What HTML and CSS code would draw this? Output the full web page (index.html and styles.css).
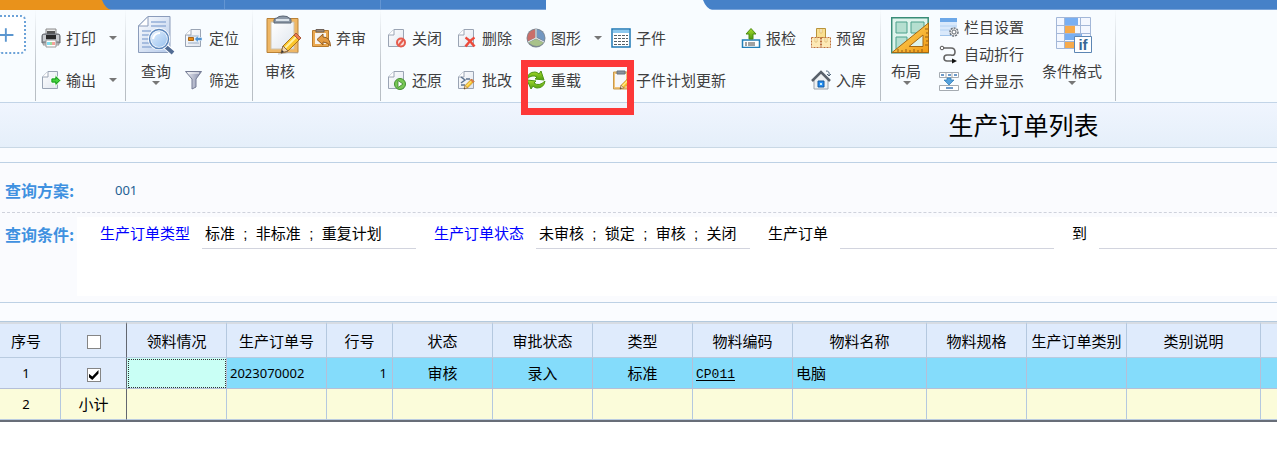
FILE: index.html
```html
<!DOCTYPE html>
<html lang="zh-CN">
<head>
<meta charset="utf-8">
<title>生产订单列表</title>
<link rel="stylesheet" href="styles.css">
</head>
<body>
<svg class="defs" aria-hidden="true">
  <defs>
    <linearGradient id="paper" x1="0" y1="0" x2="1" y2="1"><stop offset="0" stop-color="#fff"/><stop offset="1" stop-color="#dfe5ee"/></linearGradient>
    <linearGradient id="bluepaper" x1="0" y1="0" x2="1" y2="1"><stop offset="0" stop-color="#fff"/><stop offset="1" stop-color="#b4c9ea"/></linearGradient>
    <linearGradient id="lens" x1="0" y1="0" x2="1" y2="1"><stop offset="0" stop-color="#e8f3ff"/><stop offset="1" stop-color="#93bdec"/></linearGradient>
    <linearGradient id="funnel"><stop offset="0" stop-color="#eef0f5"/><stop offset="1" stop-color="#8289a8"/></linearGradient>
    <linearGradient id="green" x1="0" y1="0" x2="0" y2="1"><stop offset="0" stop-color="#a6dc2c"/><stop offset="1" stop-color="#4f9c10"/></linearGradient>
    <linearGradient id="gold" x1="0" y1="0" x2="1" y2="1"><stop offset="0" stop-color="#ffdc6a"/><stop offset="1" stop-color="#f29a12"/></linearGradient>
    <symbol id="doc" viewBox="0 0 20 20"><path d="M7 1.500h9.500v17H1.500V7z" fill="url(#paper)" stroke="#9aa4b4"/><path d="M7 1.500V7H1.500" fill="#fff" stroke="#9aa4b4"/></symbol>
    <symbol id="pencil" viewBox="0 0 24 24"><path d="M2 22l2-7L17 2l5 5L9 20z" fill="#fbc52a" stroke="#a8741b"/><path d="M6 17L19 4" stroke="#fff0a0" stroke-width="2"/><path d="M15 4l2-2 5 5-2 2z" fill="#ee7b4b" stroke="#ab5a3c"/><path d="M2 22l2-7 5 5z" fill="#f2d7ae" stroke="#8a6b4b"/><path d="M2 22l1-3 2 2z" fill="#333"/></symbol>
  </defs>
</svg>

<nav class="tabs" aria-label="页签">
  <span class="tab-home"></span>
  <svg class="tab-edge" viewBox="0 0 10 10"><path d="M0 0h1q3 8 9 10H0z" fill="#e9921b"/></svg>
  <span class="tab tab-first"></span>
  <span class="tab tab-mid"></span>
  <span class="tab tab-wide"></span>
  <span class="tab-active"></span>
  <svg class="tab-edge" viewBox="0 0 10 10"><path d="M0 0h1q3 8 9 10H0z" fill="#f8fcff"/></svg>
</nav>

<header class="ribbon">
  <section class="group group-add">
    <button class="add" aria-label="添加"><svg viewBox="0 0 25 38"><path d="M-1 19H14M6 12v14" stroke="#5b96cf" stroke-width="2"/></svg></button>
  </section>

  <section class="group group-output">
    <div class="stack">
      <button class="cmd menu"><svg class="ic" viewBox="0 0 20 20"><path d="M5 8V1h10v7" fill="#e8e8e8" stroke="#8b8b8b"/><path d="M6 3h8v5H6z" fill="#555"/><path d="M1 8q0-2 2-2h14q2 0 2 2v7H1z" fill="#9a9da3" stroke="#63666c"/><path d="M2 7h3v6H2zM15 7h3v6h-3z" fill="#c9ccd0"/><path d="M5 7h10v4H5z" fill="#292929"/><path d="M3 15h14l1 2H2z" fill="#cfd3d8" stroke="#999"/><path d="M5 12h10v7H5z" fill="#fff" stroke="#9a9a9a"/><path d="M6 14h3v3H6z" fill="#7fdcf0"/><path d="M9 14h2v3H9z" fill="#9bdc9b"/><path d="M11 14h3v3h-3z" fill="#f4a39a"/></svg><span>打印</span><i class="arrow"></i></button>
      <button class="cmd menu"><svg class="ic" viewBox="0 0 20 20"><use href="#doc" width="20" height="20"/><path d="M10 8h4V4.500l6 6-6 6V13h-4z" fill="#35cd37" stroke="#fff"/><path d="M11 9h4V7l3.500 3.500L15 14v-2h-4z" fill="#44d53c" stroke="#219b25"/></svg><span>输出</span><i class="arrow"></i></button>
    </div>
  </section>

  <section class="group group-query">
    <button class="big"><svg class="ic-big" viewBox="0 0 38 40"><path d="M11 1.500h22v36H1.500V11z" fill="url(#bluepaper)" stroke="#8b9cbb"/><path d="M11 1.500V11H1.500z" fill="#fff" stroke="#8b9cbb"/><path d="M14 7h15M14 11h15M5 16h9M5 20h7M5 24h7M5 28h9M5 32h12" stroke="#94afd8" stroke-width="1.500"/><path d="M27 30l8 7" stroke="#fff" stroke-width="6"/><path d="M28 31l8 7" stroke="#526c94" stroke-width="4"/><circle cx="22" cy="24" r="9.500" fill="url(#lens)" stroke="#fff" stroke-width="3"/><circle cx="22" cy="24" r="9.500" fill="none" stroke="#5d87bd" stroke-width="1.500"/><path d="M16 24q1-6 7-6" fill="none" stroke="#fff" stroke-width="2"/></svg><span>查询</span><i class="arrow"></i></button>
    <div class="stack">
      <button class="cmd"><svg class="ic" viewBox="0 0 20 20"><use href="#doc" width="20" height="20"/><path d="M4 8h11M4 10h3M4 12h3M4 15h11" stroke="#9baec6"/><path d="M4.500 9.500h5v3h-5z" fill="#e98d16" stroke="#a96516"/><path d="M18 9.500h-4V7.500L10.500 11l3.500 3.500v-2h4z" fill="#4e91cf" stroke="#e9f5ff" stroke-width=".6"/></svg><span>定位</span></button>
      <button class="cmd"><svg class="ic" viewBox="0 0 20 20"><path d="M1.500 1.500h16L12 9v8l-4 2V9z" fill="url(#funnel)" stroke="#747b94"/><path d="M4 3h11" stroke="#fff"/></svg><span>筛选</span></button>
    </div>
  </section>

  <section class="group group-review">
    <button class="big big-left"><svg class="ic-big" viewBox="0 0 38 40"><path d="M2 3.500h31v34H2z" fill="#efb765" stroke="#b98136"/><path d="M6 7h23v27H6z" fill="url(#paper)" stroke="#cfc3ad"/><path d="M9 8V5q0-2 3-2 1-2 6-2t6 2q2 0 2 2v3z" fill="#8d99a8" stroke="#596574"/><path d="M11 5h13" stroke="#dbe3ea" stroke-width="2"/><path d="M13 39q10-2 20-1" stroke="#bbb" fill="none"/><use href="#pencil" x="14" y="16" width="24" height="24"/></svg><span>审核</span></button>
    <div class="stack">
      <button class="cmd"><svg class="ic" viewBox="0 0 20 20"><path d="M1.500 2.500h16v16h-16z" fill="#eaa850" stroke="#b77a2e"/><path d="M4 5h11v11H4z" fill="#f7f4ef"/><path d="M5 4V1.500h8V4z" fill="#9f8a77" stroke="#6f6258"/><path d="M6 11.500L12 6v3q7 0 7.500 9-3-4-7.500-4v3z" fill="#e39b42" stroke="#925c22"/></svg><span>弃审</span></button>
    </div>
  </section>

  <section class="group group-actions">
    <button class="cmd"><svg class="ic" viewBox="0 0 20 20"><use href="#doc" width="20" height="20"/><circle cx="14" cy="14.500" r="4" fill="#f8deda" stroke="#e65b4d" stroke-width="2"/><path d="M11.500 17.500l5-6" stroke="#e65b4d" stroke-width="2"/></svg><span>关闭</span></button>
    <button class="cmd"><svg class="ic" viewBox="0 0 20 20"><use href="#doc" width="20" height="20"/><path d="M8.500 9.500q5 3 9 9M17.500 9.500q-5 3-9 9" fill="none" stroke="#ed4a3b" stroke-width="2.500"/></svg><span>删除</span></button>
    <button class="cmd menu"><svg class="ic" viewBox="0 0 20 20"><circle cx="10" cy="10" r="9.500" fill="#7c8791"/><path d="M9 10V1.500A8.500 8.500 0 0 0 2 13z" fill="#c96e69"/><path d="M11 9V1.500A8.500 8.500 0 0 1 18 13z" fill="#7297c1"/><path d="M10 11l7.500 3.500q-6 7-15 0z" fill="#a8c28a"/><path d="M10 1v9l8 4M10 10l-8 4" fill="none" stroke="#eef2f3"/></svg><span>图形</span><i class="arrow"></i></button>
    <button class="cmd"><svg class="ic" viewBox="0 0 20 20"><path d="M1 1h18v18H1z" fill="#fff" stroke="#1e78b5" stroke-width="1.500"/><path d="M2 2h16v3H2z" fill="#8cc8ee"/><path d="M3 7.500h14M3 10.500h14M3 13.500h14M3 16.500h14" stroke="#566168" stroke-dasharray="3 1"/></svg><span>子件</span></button>
    <button class="cmd"><svg class="ic" viewBox="0 0 20 20"><path d="M1.500 12h17v7.500h-17z" fill="#fff" stroke="#227fb8" stroke-width="1.500"/><path d="M4 15h2M7 15h7M4 17h2M7 17h7" stroke="#444"/><path d="M10 .5L15 6h-3v5H8V6H5z" fill="url(#green)" stroke="#4b8b13"/></svg><span>报检</span></button>
    <button class="cmd"><svg class="ic" viewBox="0 0 20 20"><path d="M5.500.5h9v9h-9z" fill="#f9df91" stroke="#b8943c"/><path d="M.5 9.500h9v10h-9zM10.500 9.500h9v10h-9z" fill="#fde9b6" stroke="#bd713c" stroke-dasharray="2 1"/><path d="M9 1v4h2V1M4 10v4h2v-4M14 10v4h2v-4" fill="#fff5d4" stroke="#d7ad59" stroke-width=".6"/></svg><span>预留</span></button>
    <button class="cmd"><svg class="ic" viewBox="0 0 20 20"><use href="#doc" width="20" height="20"/><circle cx="13" cy="14" r="5.500" fill="#78c855" stroke="#428e32"/><path d="M11 10.500v7l5-3.500z" fill="#fff" stroke="#397d2b" stroke-width=".8"/></svg><span>还原</span></button>
    <button class="cmd"><svg class="ic" viewBox="0 0 20 20"><use href="#doc" width="20" height="20"/><path d="M4 7l4 3-4 3M9 9h4M4 15h4" fill="none" stroke="#5f748f" stroke-width="1.500"/><use href="#pencil" x="6" y="8" width="12" height="12"/></svg><span>批改</span></button>
    <div class="marked">
      <button class="cmd"><svg class="ic" viewBox="0 0 20 20"><path d="M1 9Q2 2 9 2q2 0 4 2l2-3 3 9-9-1 2-2Q6 4 1 9z" fill="url(#green)" stroke="#4e9516"/><path d="M19 11q-1 7-8 7-2 0-4-2l-2 3-4-9 9 1-2 2q5 4 11-2z" fill="url(#green)" stroke="#4e9516"/></svg><span>重载</span></button>
      <div class="marker"></div>
    </div>
    <button class="cmd cmd-wide"><svg class="ic" viewBox="0 0 20 20"><path d="M2.500 2h14v17h-14z" fill="#f1c47b" stroke="#c99a4b"/><path d="M4 4h11v13H4z" fill="#f6f7fa"/><path d="M6 4V1h8v3z" fill="#8a929d" stroke="#69727e"/><use href="#pencil" x="8" y="7" width="13" height="13"/></svg><span>子件计划更新</span></button>
    <button class="cmd cmd-last"><svg class="ic" viewBox="0 0 20 20"><path d="M3 9l7-7 7 7v10H3z" fill="#eef1f3" stroke="#9ba2aa"/><path d="M1 11l9-9 9 9" fill="none" stroke="#59616b" stroke-width="2.500"/><path d="M7 11h6v6H7z" fill="#268df3" stroke="#145a9e"/><path d="M9 13h2v2H9z" fill="#c6f1ff"/><path d="M15 1q4 0 3 4M16 4l2 2 2-2" fill="none" stroke="#52677c"/></svg><span>入库</span></button>
  </section>

  <section class="group group-layout">
    <button class="big big-left"><svg class="ic-big" viewBox="0 0 38 40"><path d="M.7 2.700h36.500v35H.7z" fill="#dff4ec" stroke="#3a8d78" stroke-width="1.500"/><path d="M5 7h11v11H5zM20 7h13v11H20zM5 22h11v12H5z" fill="#b5dfd0" stroke="#4ca18c"/><path d="M1 37.500L37.500 8v29.500z" fill="url(#gold)" stroke="#a56813"/><path d="M18 31.500L32 20v11.500z" fill="#dff4ec" stroke="#a56813"/><path d="M7 37v-3M11 37v-2M15 37v-3M19 37v-2M23 37v-3M27 37v-2M31 37v-3M37 14h-3M37 18h-2M37 22h-3M37 26h-2M37 30h-3" stroke="#935c17"/></svg><span>布局</span><i class="arrow"></i></button>
    <div class="stack stack-three">
      <button class="cmd"><svg class="ic" viewBox="0 0 20 20"><path d="M1 1h17v18H1z" fill="#d9e9fb"/><path d="M1 1h17v4H1z" fill="#6da8e8"/><path d="M1 9h17M1 13h17" stroke="#b3d2f3"/><path d="M1 18.500h17" stroke="#9fc4eb"/><circle cx="15" cy="15" r="4" fill="#eee" stroke="#6b727a" stroke-width="1.500" stroke-dasharray="2 1"/><circle cx="15" cy="15" r="2" fill="#fff" stroke="#636b73"/></svg><span>栏目设置</span></button>
      <button class="cmd"><svg class="ic" viewBox="0 0 20 20"><path d="M4 4h8q4 0 4 4t-4 3H8q-3 0-3 3t3 3h7" fill="none" stroke="#666" stroke-width="1.600"/><circle cx="3" cy="4" r="1.800" fill="#fff" stroke="#555"/><path d="M13 14.500l5 2.500-5 2.500z" fill="#111"/></svg><span>自动折行</span></button>
      <button class="cmd"><svg class="ic" viewBox="0 0 20 20"><path d="M.5 1.500h19v5H.5zM.5 14.500h19v5H.5z" fill="#fff" stroke="#a5abb1"/><path d="M7 2v4M13 2v4" stroke="#a5abb1"/><path d="M2 4h3M9 4h3M15 4h3M7 17h7" stroke="#3e79b7" stroke-width="1.500"/><path d="M8 7h4v2h3l-5 5-5-5h3z" fill="#56a2dc" stroke="#2878b5" stroke-width=".7"/></svg><span>合并显示</span></button>
    </div>
    <button class="big big-format"><svg class="ic-big" viewBox="0 0 38 40"><path d="M1.500 2.500h34v31h-34z" fill="#f3f7ff"/><path d="M10 3h13v7H10zM10 18h17v7H10z" fill="#79aff2"/><path d="M10 11h10v7H10zM10 26h10v7H10z" fill="#f6aa4c"/><path d="M1.500 2.500h34v31h-34zM1 10.500h34M1 18.500h34M1 26.500h34M9.500 3v31M25.500 3v31" fill="none" stroke="#a3b7d8"/><path d="M19.500 21.500h17v16h-17z" fill="#fff" stroke="#5c86b4"/><text x="28" y="35" text-anchor="middle" class="if-text">if</text></svg><span>条件格式</span><i class="arrow"></i></button>
  </section>
</header>

<h1 class="title">生产订单列表</h1>

<main>
  <form class="query">
    <div class="scheme"><span class="query-label">查询方案:</span><a class="scheme-no" href="#">001</a></div>
    <div class="conditions">
      <span class="query-label">查询条件:</span>
      <div class="fields">
        <label class="key" for="f-type">生产订单类型</label><input class="field" id="f-type" value="标准  ;  非标准  ;  重复计划">
        <label class="key" for="f-state">生产订单状态</label><input class="field" id="f-state" value="未审核  ;  锁定  ;  审核  ;  关闭">
        <label for="f-from">生产订单</label><input class="field" id="f-from">
        <label for="f-to">到</label><input class="field field-last" id="f-to">
      </div>
    </div>
  </form>

  <table class="orders">
    <colgroup><col class="c-no"><col class="c-check"><col class="c-std"><col class="c-std"><col class="c-line"><col class="c-std"><col class="c-std"><col class="c-std"><col class="c-std"><col class="c-wide"><col class="c-std"><col class="c-std"><col class="c-wide"><col></colgroup>
    <thead>
      <tr><th>序号</th><th class="fixed"><input type="checkbox" aria-label="全选"></th><th>领料情况</th><th>生产订单号</th><th>行号</th><th>状态</th><th>审批状态</th><th>类型</th><th>物料编码</th><th>物料名称</th><th>物料规格</th><th>生产订单类别</th><th>类别说明</th><th></th></tr>
    </thead>
    <tbody>
      <tr class="selected"><td class="head">1</td><td class="head fixed"><input type="checkbox" aria-label="选择第1行" checked></td><td class="focus"></td><td class="left">2023070002</td><td class="right">1</td><td>审核</td><td>录入</td><td>标准</td><td class="left"><a class="code" href="#">CP011</a></td><td class="left name">电脑</td><td></td><td></td><td></td><td></td></tr>
      <tr class="subtotal"><td>2</td><td class="fixed">小计</td><td></td><td></td><td></td><td></td><td></td><td></td><td></td><td></td><td></td><td></td><td></td><td></td></tr>
    </tbody>
  </table>
</main>
</body>
</html>
```
FILE: styles.css
```css
* { box-sizing: border-box; }
body { margin: 0; background: #fff; color: #000; font: 15px/20px "Noto Sans CJK SC", sans-serif; overflow-x: hidden; }
button, input { margin: 0; padding: 0; border: 0; background: none; color: inherit; font: inherit; }
.defs { position: absolute; width: 0; height: 0; }

.tabs { display: flex; height: 10px; background: #4681c8; border-bottom: 1px solid #79a3d8; }
.tab-home { width: 101px; height: 10px; background: #e9921b; }
.tab-edge { width: 10px; height: 10px; flex: none; }
.tab { border-right: 1px solid #6395d2; }
.tab-first { width: 114px; }
.tab-mid { width: 156px; }
.tab-wide { width: 165px; border: 0; }
.tab-active { width: 156px; height: 10px; background: #f8fcff; }

.ribbon { display: flex; height: 93px; background: #f8fcff; border-bottom: 1px solid #c2d4e7; color: #3f3f3f; }
.group { display: flex; align-items: flex-start; flex: none; margin-bottom: 1px; padding: 5px 8px 0 4px; border-right: 1px solid; border-image: linear-gradient(#f8fcff, #bfc5cb 60%, #b7bdc3) 1; }
.group-add { padding: 5px 9px 0 0; }
.group-output { padding-left: 5px; }
.add { width: 26px; height: 39px; border: 2px dotted #6ba2d8; border-left: 0; border-radius: 0 5px 5px 0; background: #fff; }
.add svg { display: block; width: 24px; height: 36px; }
.group-query { gap: 9px; padding: 5px 13px 0 11px; }
.group-review { gap: 8px; padding: 5px 14px 0 12px; }
.group-actions { display: grid; grid-template-columns: 70px 69px 85px 130px 70px 56px; row-gap: 20px; align-content: start; padding: 17px 13px 0 6px; }
.group-layout { gap: 10px; padding: 5px 13px 0 10px; }
.stack { display: flex; flex-direction: column; gap: 20px; padding-top: 12px; }
.stack-three { gap: 5px; padding-top: 1px; }
.cmd { display: flex; align-items: center; gap: 5px; height: 22px; white-space: nowrap; }
.menu .arrow { margin-left: 8px; }
.ic { width: 20px; height: 20px; flex: none; }
.cmd-last { grid-column: 6; }
.cmd-wide { grid-column: span 2; }
.arrow { width: 8px; height: 4px; background: #777; clip-path: polygon(0 0, 100% 0, 50% 100%); }
.big { display: flex; flex-direction: column; align-items: center; width: 38px; }
.big span { margin-top: 6px; white-space: nowrap; }
.ic-big { display: block; width: 38px; height: 40px; }
.big-left { align-items: flex-start; }
.big-left .arrow { margin-left: 12px; }
.big-format { width: 60px; margin-left: 8px; }
.big-format .ic-big { margin-left: 4px; }
.if-text { font: bold 15px "Liberation Sans", sans-serif; fill: #386895; }
.marked { position: relative; }
.marker { position: absolute; left: -5px; top: -9px; width: 113px; height: 55px; border: 7px solid #fd3838; pointer-events: none; z-index: 1; }

.title { margin: 0; padding-left: calc(50% + 310px); height: 45px; background: linear-gradient(#f0f5fe, #e5effa); border-bottom: 1px solid #c9d8e5; font-size: 25px; font-weight: 400; line-height: 42px; white-space: nowrap; }

main { padding-top: 14px; background: #fafcff; }
.query { padding-bottom: 6px; border-top: 1px solid #bdd1e5; border-bottom: 1px solid #bdd1e5; background: #fafbfe; }
.scheme { display: flex; align-items: center; height: 50px; margin-left: 2px; padding: 4px 0 0 3px; border-bottom: 1px dashed #cfd2dc; }
.query-label { width: 72px; flex: none; color: #3f91e0; font-weight: 700; font-size: 16px; }
.scheme-no { margin-left: 38px; color: #245f93; font: 13px/20px "Noto Sans", sans-serif; text-decoration: none; }
.conditions { display: flex; padding: 4px 0 0 5px; }
.conditions > .query-label { padding-top: 7px; }
.fields { display: flex; align-items: flex-start; flex: 1; min-width: 0; height: 79px; padding: 2px 0 0 23px; background: #fff; white-space: nowrap; }
.fields label { flex: none; line-height: 28px; }
.fields .key { color: #00f; }
.field { width: 214px; height: 30px; margin: 0 18px 0 12px; padding: 0 3px 2px; flex: none; border-bottom: 1px solid #d2d4de; font-family: "Liberation Sans", "Noto Sans CJK SC", sans-serif; outline: 0; }
.field-last { flex: 1; min-width: 0; margin-right: 0; }

.orders { width: 100%; margin-top: 18px; table-layout: fixed; border-spacing: 0; border-top: 1px solid #b3c9dd; border-bottom: 2px solid #686e78; background: #eaeff5; font-size: 15px; line-height: 20px; }
.orders thead th { height: 36px; border-top: 2px solid #d7dce3; background: #dfebfc; font-weight: 400; }
.orders th, .orders td { padding: 0; border-right: 1px solid #b4c8df; border-bottom: 1px solid #b9cbe0; text-align: center; white-space: nowrap; }
.orders th:last-child, .orders td:last-child { border-right: 0; }
.orders td { height: 31px; }
.orders th:first-child, .orders td:first-child { padding-right: 8px; }
.c-no { width: 61px; }
.c-check, .c-line { width: 66px; }
.c-std { width: 100px; }
.c-wide { width: 134px; }
.selected td { background: #84dcfb; border-color: #b5bfd8; }
.selected .head { background: #dfebfc; }
.selected .focus { background: #c9fff5; outline: 1px dotted #333; outline-offset: -2px; }
.subtotal td { background: #fbfcda; }
.orders .fixed { border-right-color: #626770; }
.orders .left { padding-left: 3px; text-align: left; }
.orders .right { padding-right: 5px; text-align: right; }
.orders td.left, .orders td.right, .orders td:first-child { font-family: "Noto Sans", "Noto Sans CJK SC", sans-serif; font-size: 13px; }
.orders td.name { font-size: 15px; }
.code { color: #000; font: 13px "Liberation Mono", monospace; text-underline-offset: 2px; }
input[type="checkbox"] { appearance: none; display: inline-block; width: 14px; height: 14px; border: 1px solid #858585; background: #fff; vertical-align: middle; }
input[type="checkbox"]:checked::before { content: ""; display: block; width: 10px; height: 10px; margin: 1px; background: #000; clip-path: polygon(0 35%, 38% 65%, 100% 0, 100% 35%, 38% 100%, 0 70%); }
```
